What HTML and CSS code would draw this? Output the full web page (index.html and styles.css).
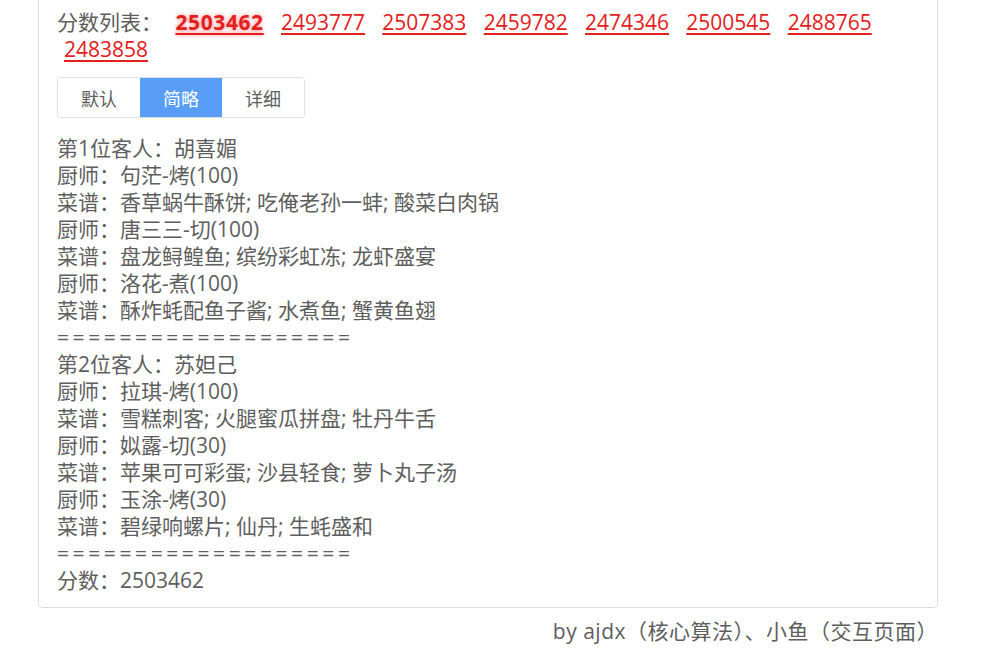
FILE: index.html
```html
<!DOCTYPE html>
<html lang="zh">
<head>
<meta charset="utf-8">
<title>分数列表</title>
<link rel="stylesheet" href="styles.css">
</head>
<body>
<div class="page">
  <div class="card">
    <div class="scores">
      <span class="label">分数列表：</span>
      <a class="score active" href="#">2503462</a>
      <a class="score" href="#">2493777</a>
      <a class="score" href="#">2507383</a>
      <a class="score" href="#">2459782</a>
      <a class="score" href="#">2474346</a>
      <a class="score" href="#">2500545</a>
      <a class="score" href="#">2488765</a>
      <a class="score" href="#">2483858</a>
    </div>
    <div class="tabs">
      <button class="tab">默认</button>
      <button class="tab on">简略</button>
      <button class="tab">详细</button>
    </div>
    <div class="result">
      <div>第1位客人：胡喜媚</div>
      <div>厨师：句茫-烤(100)</div>
      <div>菜谱：香草蜗牛酥饼; 吃俺老孙一蚌; 酸菜白肉锅</div>
      <div>厨师：唐三三-切(100)</div>
      <div>菜谱：盘龙鲟鳇鱼; 缤纷彩虹冻; 龙虾盛宴</div>
      <div>厨师：洛花-煮(100)</div>
      <div>菜谱：酥炸蚝配鱼子酱; 水煮鱼; 蟹黄鱼翅</div>
      <div class="sep">===================</div>
      <div>第2位客人：苏妲己</div>
      <div>厨师：拉琪-烤(100)</div>
      <div>菜谱：雪糕刺客; 火腿蜜瓜拼盘; 牡丹牛舌</div>
      <div>厨师：姒露-切(30)</div>
      <div>菜谱：苹果可可彩蛋; 沙县轻食; 萝卜丸子汤</div>
      <div>厨师：玉涂-烤(30)</div>
      <div>菜谱：碧绿响螺片; 仙丹; 生蚝盛和</div>
      <div class="sep">===================</div>
      <div>分数：2503462</div>
    </div>
  </div>
  <div class="footer">by ajdx（核心算法）、小鱼（交互页面）</div>
</div>
</body>
</html>
```

FILE: styles.css
```css
html, body {
  margin: 0;
  padding: 0;
  background: #fff;
}
body {
  font-family: "Open Sans", "Noto Sans CJK SC", sans-serif;
  color: #5e5e5e;
  font-size: 21px;
  line-height: 27px;
}
.page {
  width: 900px;
  margin-left: 38px;
}
.card {
  margin-top: -12px;
  border: 1px solid #dcdcdc;
  border-radius: 4px;
  padding: 20px 18px 13px 18px;
}
.scores {
  line-height: 27px;
}
.label {
  margin-right: 1px;
}
.score {
  color: #e3201c;
  text-decoration: underline;
  text-decoration-thickness: 2px;
  text-underline-offset: 3px;
  margin: 0 4.8px 0 7px;
}
.score.active {
  font-weight: bold;
  letter-spacing: 0.6px;
  text-shadow: 0 0 4px rgba(255, 40, 40, 0.55);
}
.tabs {
  display: flex;
  margin-top: 14px;
  margin-bottom: 17px;
  width: max-content;
  border: 1px solid #dcdfe6;
  border-radius: 4px;
  overflow: hidden;
}
.tab {
  font-family: "Noto Sans CJK SC", sans-serif;
  font-size: 18px;
  color: #5e5e5e;
  background: #fff;
  border: 0;
  height: 39px;
  width: 82px;
  padding: 0;
}
.tab.on {
  background: #589ef8;
  color: #fff;
}
.sep {
  letter-spacing: 3.6px;
}
.footer {
  text-align: right;
  padding-right: 0;
  margin-top: 10px;
  letter-spacing: 0.5px;
}
```
